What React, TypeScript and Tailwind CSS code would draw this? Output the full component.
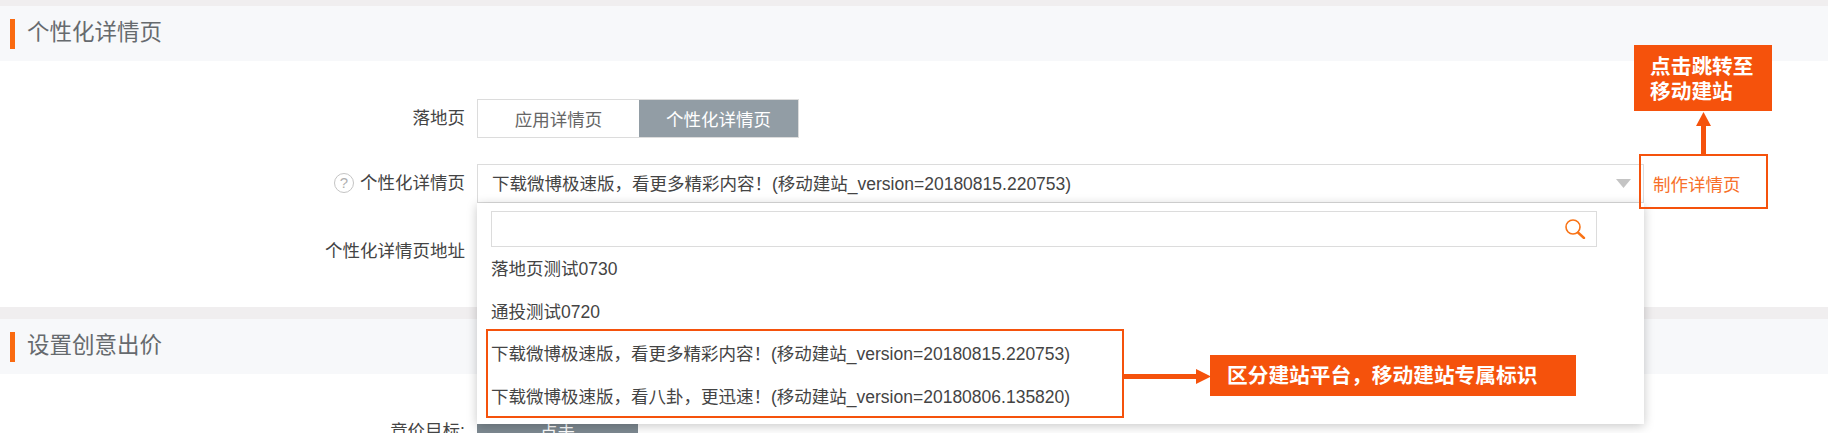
import React from "react";

const FONT = "[font-family:'Liberation_Sans','Noto_Sans_CJK_SC',sans-serif]";

function SectionHeader({ title }: { title: string }) {
  return (
    <div className="h-[55px] bg-[#f7f8fa] flex items-center pl-[10px]">
      <span className="w-[5px] h-[30px] bg-[#fa6a10]" />
      <span className="ml-[12px] pb-[1px] text-[22.5px] leading-[30px] text-[#666a6e]">{title}</span>
    </div>
  );
}

function Label({ children, className = "" }: { children: React.ReactNode; className?: string }) {
  return (
    <div className={`w-[465px] shrink-0 flex justify-end items-center text-[17.5px] leading-[24px] text-[#444] ${className}`}>
      {children}
    </div>
  );
}

function Option({ text, className = "" }: { text: string; className?: string }) {
  return <div className={`text-[17.5px] leading-[24px] text-[#444] whitespace-nowrap ${className}`}>{text}</div>;
}

export default function App() {
  return (
    <div className={`relative w-[1828px] h-[433px] overflow-hidden bg-white ${FONT}`}>
      <div className="h-[6px] bg-[#f0eeef]" />
      <SectionHeader title="个性化详情页" />

      <div className="h-[246px] pt-[38px]">
        <div className="flex h-[39px]">
          <Label className="h-[39px] pb-[2px]">落地页</Label>
          <div className="ml-[12px] flex border border-[#dcdcdc] h-[39px] w-[322px] text-[17.5px]">
            <div className="w-[161px] pt-[3px] flex items-center justify-center text-[#666]">应用详情页</div>
            <div className="flex-1 pt-[3px] flex items-center justify-center bg-[#929da5] text-white">个性化详情页</div>
          </div>
        </div>

        <div className="flex h-[39px] mt-[26px]">
          <Label className="h-[39px] pb-[2px]">
            <span className="w-[20px] h-[20px] mr-[6px] rounded-full border border-[#c4c4c4] flex items-center justify-center text-[15px] leading-none text-[#b0b0b0]">
              ?
            </span>
            个性化详情页
          </Label>
          <div className="ml-[12px] w-[1167px] h-[39px] border border-[#dcdcdc] flex items-center justify-between pl-[14px] pr-[12px]">
            <span className="pt-[2px] text-[17.5px] text-[#444] whitespace-nowrap">
              下载微博极速版，看更多精彩内容！(移动建站_version=20180815.220753)
            </span>
            <svg width="15" height="9" viewBox="0 0 15 9">
              <polygon points="0,0 15,0 7.5,9" fill="#c4c4c4" />
            </svg>
          </div>
        </div>

        <div className="flex mt-[36px]">
          <Label>个性化详情页地址</Label>
        </div>
      </div>

      <div className="h-[12px] bg-[#f0eeef]" />
      <SectionHeader title="设置创意出价" />

      <div className="flex pt-[49px]">
        <Label className="h-[16px]">竞价目标:</Label>
        <div className="ml-[12px] w-[161px] h-[39px] bg-[#7d8991] text-white text-[17.5px] leading-[20px] text-center">
          点击
        </div>
      </div>

      {/* Open dropdown over the form */}
      <div className="absolute left-[477px] top-[203px] w-[1167px] h-[221px] bg-white shadow-[0_2px_10px_rgba(0,0,0,0.22)] pl-[14px] pt-[8px]">
        <div className="w-[1106px] h-[36px] border border-[#dcdcdc] flex items-center justify-end pr-[10px]">
          <svg width="22" height="20" viewBox="0 0 22 20" fill="none" stroke="#f97316">
            <circle cx="9" cy="8" r="7" strokeWidth="1.6" />
            <path d="M14 13.5 L20 19" strokeWidth="2.4" strokeLinecap="round" />
          </svg>
        </div>
        <Option text="落地页测试0730" className="mt-[10px]" />
        <Option text="通投测试0720" className="mt-[19px]" />
        <Option text="下载微博极速版，看更多精彩内容！(移动建站_version=20180815.220753)" className="mt-[18px]" />
        <Option text="下载微博极速版，看八卦，更迅速！(移动建站_version=20180806.135820)" className="mt-[19px]" />
      </div>

      {/* Annotations */}
      <div className="absolute left-[486px] top-[329px] w-[638px] h-[89px] border-2 border-[#f5520c]" />
      <div className="absolute left-[1124px] top-[369px] w-[87px] h-[15px] flex items-center">
        <span className="flex-1 h-[5px] bg-[#f5520c]" />
        <svg width="15" height="15" viewBox="0 0 15 15" className="shrink-0">
          <polygon points="0,0 15,7.5 0,15" fill="#f5520c" />
        </svg>
      </div>
      <div className="absolute left-[1210px] top-[355px] w-[366px] h-[41px] bg-[#f5520c] flex items-center pl-[17px] text-white font-bold text-[20.7px] whitespace-nowrap">
        区分建站平台，移动建站专属标识
      </div>

      <div className="absolute left-[1634px] top-[45px] w-[138px] h-[66px] bg-[#f5520c] pl-[16px] pt-[9px] text-white font-bold text-[20.7px] leading-[25px]">
        点击跳转至
        <br />
        移动建站
      </div>
      <div className="absolute left-[1696px] top-[112px] w-[15px] h-[43px] flex flex-col items-center">
        <svg width="15" height="14" viewBox="0 0 15 14" className="shrink-0">
          <polygon points="7.5,0 15,14 0,14" fill="#f5520c" />
        </svg>
        <span className="w-[5px] flex-1 bg-[#f5520c]" />
      </div>
      <div className="absolute left-[1639px] top-[154px] w-[129px] h-[55px] border-2 border-[#f5520c] pl-[12px] pt-[7px] flex items-center text-[17.5px] text-[#f7702a]">
        制作详情页
      </div>
    </div>
  );
}
